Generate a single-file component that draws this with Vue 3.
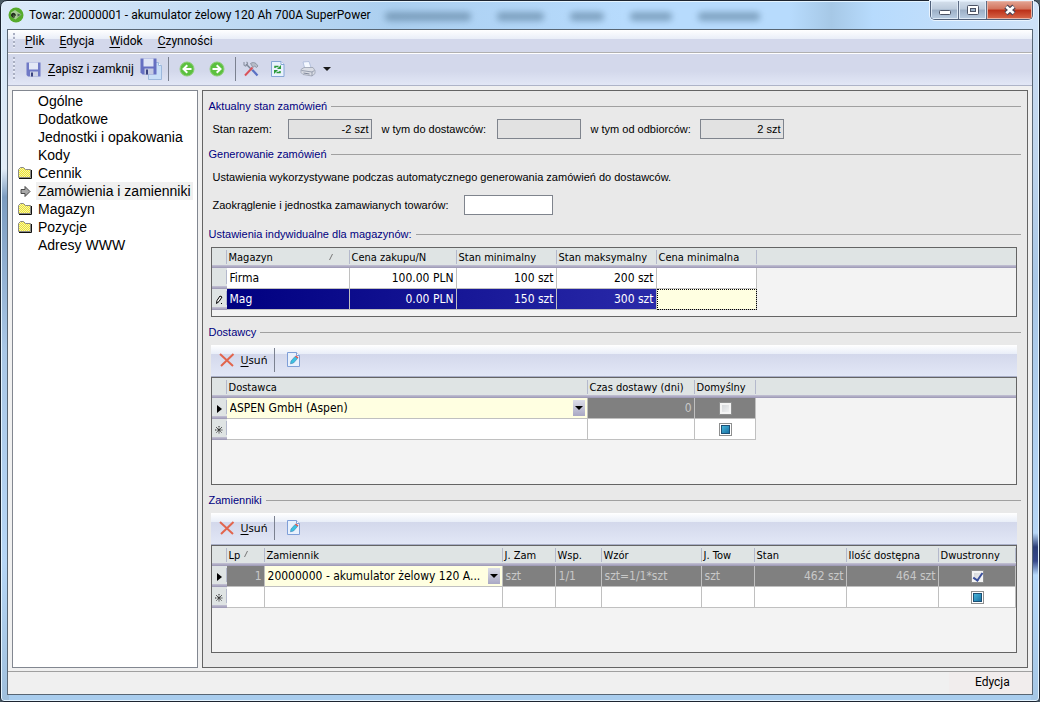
<script setup>
import { ref } from 'vue'

const menu = ['Plik', 'Edycja', 'Widok', 'Czynności']
const ghosts = [86, 47, 34, 42, 62]

const tree = [
  { label: 'Ogólne' },
  { label: 'Dodatkowe' },
  { label: 'Jednostki i opakowania' },
  { label: 'Kody' },
  { label: 'Cennik', icon: 'folder' },
  { label: 'Zamówienia i zamienniki', icon: 'arrow' },
  { label: 'Magazyn', icon: 'folder' },
  { label: 'Pozycje', icon: 'folder' },
  { label: 'Adresy WWW' },
]

const warehouses = [
  { name: 'Firma', price: '100.00 PLN', min: '100 szt', max: '200 szt' },
  { name: 'Mag', price: '0.00 PLN', min: '150 szt', max: '300 szt', active: true },
]

const rounding = ref('')
</script>

<template>
  <div class="window">
    <header class="titlebar">
      <div class="ghosts" aria-hidden="true">
        <i v-for="(w, i) in ghosts" :key="i" :style="{ width: w + 'px' }"></i>
      </div>
      <svg class="app-icon" width="16" height="16" viewBox="0 0 16 16">
        <circle cx="8" cy="8" r="7.5" fill="#56ab2c" />
        <path d="M3 5.500L7 3l6.500 4.500-6 5-4.500-3z" fill="#a9cb97" />
        <path d="M3.800 8h3.400a1.800 1.800 0 1 0-.5 1.500" fill="none" stroke="#1d2a18" stroke-width="1.300" />
        <path d="M9.500 6.500l3.500 1.200-3.500 2z" fill="#55655a" />
      </svg>
      <h1>Towar: 20000001 - akumulator żelowy 120 Ah 700A SuperPower</h1>
      <div class="winbtns">
        <button type="button" aria-label="Minimalizuj">
          <svg width="14" height="14" viewBox="0 0 14 14"><rect x="1.500" y="7.500" width="11" height="4" rx="1" fill="#fff" stroke="#4a5264" /></svg>
        </button>
        <button type="button" aria-label="Maksymalizuj">
          <svg width="14" height="14" viewBox="0 0 14 14"><rect x="1.500" y="2.500" width="11" height="9" rx="1" fill="#fff" stroke="#4a5264" /><rect x="4.500" y="5.500" width="5" height="3" fill="#9db3cb" stroke="#4a5264" /></svg>
        </button>
        <button type="button" class="close" aria-label="Zamknij">
          <svg width="14" height="14" viewBox="0 0 14 14"><path d="M3 3.500l8 7M11 3.500l-8 7" stroke="#4a4455" stroke-width="5" /><path d="M3.300 3.800l7.400 6.400M10.700 3.800l-7.400 6.400" stroke="#fff" stroke-width="2.800" /></svg>
        </button>
      </div>
    </header>

    <div class="client">
      <nav class="menubar">
        <span class="grip"></span>
        <button v-for="m in menu" :key="m" type="button"><u>{{ m[0] }}</u>{{ m.slice(1) }}</button>
      </nav>

      <div class="toolbar">
        <span class="grip"></span>
        <button type="button" class="save">
          <svg width="15" height="15" viewBox="0 0 15 15"><path d="M.5.500h14v14H2L.5 13z" fill="#6f79c6" /><path d="M3 .5h9v7H3z" fill="#e3e8f6" /><path d="M4 9.500h8v5H4z" fill="#cdd3e6" /><path d="M5 10.500h2v4H5z" fill="#39427f" /></svg>
          <span><u>Z</u>apisz i zamknij</span>
        </button>
        <button type="button" class="saveall" aria-label="Zapisz i nowy">
          <svg width="23" height="22" viewBox="0 0 23 22"><path d="M8.500 4.500h10l3 3v14h-13z" fill="#c9dff7" stroke="#9db8dc" /><path d="M18.500 4.500v3h3" fill="#fff" stroke="#9db8dc" /><path d="M.5.500h16v16h-14l-2-2z" fill="#6670c2" /><path d="M3.500.500h10v8h-10z" fill="#dfe5f6" /><path d="M4.500 10.500h9v6h-9z" fill="#c5cbe2" /><path d="M6 11.500h2v5H6z" fill="#39427f" /></svg>
        </button>
        <span class="sep"></span>
        <button type="button" class="nav" aria-label="Poprzedni">
          <svg width="16" height="16" viewBox="0 0 16 16"><circle cx="8" cy="8" r="7" fill="#5cc040" stroke="#8ccf76" /><path d="M12.500 8H5M8.300 4.300L4.500 8l3.800 3.700" fill="none" stroke="#fff" stroke-width="2" /></svg>
        </button>
        <button type="button" class="nav" aria-label="Następny">
          <svg width="16" height="16" viewBox="0 0 16 16"><circle cx="8" cy="8" r="7" fill="#5cc040" stroke="#8ccf76" /><path d="M3.500 8H11M7.700 4.300L11.500 8l-3.800 3.700" fill="none" stroke="#fff" stroke-width="2" /></svg>
        </button>
        <span class="sep"></span>
        <button type="button" class="tools" aria-label="Narzędzia">
          <svg width="16" height="16" viewBox="0 0 16 16"><path d="M3 3l7 7" stroke="#7d8698" stroke-width="1.400" /><path d="M1 1v3l1.500 1 2-1V2L3.500.800" fill="none" stroke="#8b93a3" stroke-width="1.100" /><path d="M9.500 9l5 5.500" stroke="#5a70c4" stroke-width="2.200" /><path d="M9.500 6.500L2 14.500" stroke="#d9525a" stroke-width="2" /><path d="M7.500 2.500c2-1.500 4-1 5.500 0L15 5l-1.500 1.500-2-1.500-1.500 1.500z" fill="#b6bcc8" stroke="#7d8594" stroke-width=".7" /></svg>
        </button>
        <button type="button" class="refresh" aria-label="Odśwież">
          <svg width="14" height="16" viewBox="0 0 14 16"><path d="M.5.500h9.500l3 3v12H.5z" fill="#e9f2fd" stroke="#86a6d6" /><path d="M10 .5v3h3" fill="#fff" stroke="#86a6d6" /><path d="M4 7V5.500h3.500M9 10v1.500H5.500" fill="none" stroke="#2c9a3a" stroke-width="1.500" /><path d="M10 4v4H6z M3 9h4l-4 4z" fill="#2c9a3a" /></svg>
        </button>
        <button type="button" class="print" aria-label="Drukuj">
          <svg width="16" height="16" viewBox="0 0 16 16"><path d="M3 1l6-.5 2 6-6 1.500z" fill="#f4f8ff" stroke="#a9b9d8" stroke-width=".8" /><path d="M1 8.500l3-2 9 0 2 3v3l-3 2.500-9-1.500-2-2z" fill="#d9dce4" stroke="#9ba1b0" stroke-width=".8" /><path d="M1.500 9.500l10.500 1.500 2.500-1.500M12 11v4" fill="none" stroke="#8f96a8" stroke-width=".9" /><path d="M3.500 12l6 1" stroke="#7f879a" /></svg>
          <svg width="8" height="4" viewBox="0 0 8 4"><path d="M0 0h8L4 4z" fill="#1a1a1a" /></svg>
        </button>
      </div>

      <div class="body">
        <aside class="tree">
          <a v-for="t in tree" :key="t.label" href="#" :class="{ current: t.icon === 'arrow' }">
            <span class="ticon">
              <svg v-if="t.icon === 'folder'" width="15" height="12" viewBox="0 0 15 12">
                <defs><pattern id="dither" width="2" height="2" patternUnits="userSpaceOnUse"><rect width="2" height="2" fill="#f6f2b0" /><path d="M0 0h1v1H0zM1 1h1v1H1z" fill="#efe630" /></pattern></defs>
                <path d="M.5 10.500V2.500l2-2h3l2 2h5v8z" fill="url(#dither)" stroke="#8a8a86" /><path d="M1 11.500h12.500V3" fill="none" stroke="#111" />
              </svg>
              <svg v-else-if="t.icon" width="11" height="11" viewBox="0 0 11 11"><path d="M1 3.500h4v-3l5 5-5 5v-3H1z" fill="#a8a8a8" stroke="#4a4a4a" /></svg>
            </span>
            <span class="tlabel">{{ t.label }}</span>
          </a>
        </aside>

        <main class="panel">
          <h2><span>Aktualny stan zamówień</span></h2>
          <div class="row">
            <label for="total">Stan razem:</label>
            <input id="total" class="sum" value="-2 szt" readonly />
            <label for="sup" class="wide">w tym do dostawców:</label>
            <input id="sup" class="sum" value="" readonly />
            <label for="cust" class="mid">w tym od odbiorców:</label>
            <input id="cust" class="sum" value="2 szt" readonly />
          </div>

          <h2><span>Generowanie zamówień</span></h2>
          <p class="note">Ustawienia wykorzystywane podczas automatycznego generowania zamówień do dostawców.</p>
          <div class="row round">
            <label for="round">Zaokrąglenie i jednostka zamawianych towarów:</label>
            <input id="round" v-model="rounding" class="free" />
          </div>

          <h2 class="lower"><span>Ustawienia indywidualne dla magazynów:</span></h2>
          <div class="grid short">
            <table>
              <colgroup><col class="c15" /><col class="c123" /><col class="c107" /><col class="c100" /><col class="c100" /><col class="c100" /><col /></colgroup>
              <thead>
                <tr>
                  <th></th>
                  <th class="sorted">Magazyn<svg width="5" height="6" viewBox="0 0 5 6"><path d="M.5 6L3.500 0" stroke="#777" /></svg></th>
                  <th>Cena zakupu/N</th><th>Stan minimalny</th><th>Stan maksymalny</th><th>Cena minimalna</th><th></th>
                </tr>
              </thead>
              <tbody>
                <tr v-for="w in warehouses" :key="w.name" :class="{ active: w.active }">
                  <td class="ind">
                    <svg v-if="w.active" width="8" height="10" viewBox="0 0 8 10"><path d="M1.500 8.500l.5-3L5 1l2 1-3 4.500z" fill="#fff" stroke="#000" /><path d="M6 8.500h1" stroke="#000" /></svg>
                  </td>
                  <td>{{ w.name }}</td>
                  <td class="num">{{ w.price }}</td>
                  <td class="num">{{ w.min }}</td>
                  <td class="num">{{ w.max }}</td>
                  <td :class="{ focus: w.active }"></td>
                  <td class="rest"></td>
                </tr>
              </tbody>
            </table>
          </div>

          <h2><span>Dostawcy</span></h2>
          <div class="gridbar">
            <button type="button" class="del">
              <svg width="16" height="14" viewBox="0 0 16 14"><path d="M1 1l13 12M14.500 1L2 13" stroke="#e2654d" stroke-width="2" /></svg>
              <span><u>U</u>suń</span>
            </button>
            <span class="sep"></span>
            <button type="button" aria-label="Edytuj dostawcę">
              <svg width="13" height="15" viewBox="0 0 13 15"><path d="M.5.500h9l3 3v11H.5z" fill="#e8f1fd" stroke="#7f9fd8" /><path d="M9.500.500v3h3" fill="#fff" stroke="#7f9fd8" /><path d="M4 9l4-4.500 2.500 2-4 4.500-3 .8z" fill="#3cc3e0" stroke="#3a7fb4" stroke-width=".6" /><path d="M8 4.500l1-1 2.500 2-1 1z" fill="#e0564a" /></svg>
            </button>
          </div>
          <div class="grid">
            <table>
              <colgroup><col class="c15" /><col class="c361" /><col class="c107" /><col class="c61" /><col /></colgroup>
              <thead>
                <tr><th></th><th>Dostawca</th><th>Czas dostawy (dni)</th><th>Domyślny</th><th></th></tr>
              </thead>
              <tbody>
                <tr class="grey">
                  <td class="ind"><svg width="5" height="8" viewBox="0 0 5 8"><path d="M0 0l5 4-5 4z" /></svg></td>
                  <td class="edit"><div class="combo"><select aria-label="Dostawca"><option>ASPEN GmbH (Aspen)</option></select><svg width="12" height="16" viewBox="0 0 12 16"><path d="M2 6h8L6 10z" /></svg></div></td>
                  <td class="num">0</td>
                  <td class="chk"><input type="checkbox" aria-label="Domyślny" /></td>
                  <td class="rest"></td>
                </tr>
                <tr>
                  <td class="ind"><svg width="8" height="8" viewBox="0 0 8 8"><path d="M4 0v8M0 4h8M1 1l6 6M7 1L1 7" stroke="#222" stroke-dasharray="1 .6" /></svg></td>
                  <td></td><td></td>
                  <td class="chk"><input type="checkbox" class="mixed" aria-label="Domyślny, nowy wiersz" /></td>
                  <td class="rest"></td>
                </tr>
              </tbody>
            </table>
          </div>

          <h2><span>Zamienniki</span></h2>
          <div class="gridbar">
            <button type="button" class="del">
              <svg width="16" height="14" viewBox="0 0 16 14"><path d="M1 1l13 12M14.500 1L2 13" stroke="#e2654d" stroke-width="2" /></svg>
              <span><u>U</u>suń</span>
            </button>
            <span class="sep"></span>
            <button type="button" aria-label="Edytuj zamiennik">
              <svg width="13" height="15" viewBox="0 0 13 15"><path d="M.5.500h9l3 3v11H.5z" fill="#e8f1fd" stroke="#7f9fd8" /><path d="M9.500.500v3h3" fill="#fff" stroke="#7f9fd8" /><path d="M4 9l4-4.500 2.500 2-4 4.500-3 .8z" fill="#3cc3e0" stroke="#3a7fb4" stroke-width=".6" /><path d="M8 4.500l1-1 2.500 2-1 1z" fill="#e0564a" /></svg>
            </button>
          </div>
          <div class="grid last">
            <table>
              <colgroup><col class="c15" /><col class="c38" /><col class="c238" /><col class="c53" /><col class="c46" /><col class="c100" /><col class="c53" /><col class="c92" /><col class="c92" /><col class="c77" /><col /></colgroup>
              <thead>
                <tr>
                  <th></th>
                  <th class="sorted">Lp<svg width="5" height="6" viewBox="0 0 5 6"><path d="M.5 6L3.500 0" stroke="#777" /></svg></th>
                  <th>Zamiennik</th><th>J. Zam</th><th>Wsp.</th><th>Wzór</th><th>J. Tow</th><th>Stan</th><th>Ilość dostępna</th><th>Dwustronny</th><th></th>
                </tr>
              </thead>
              <tbody>
                <tr class="grey">
                  <td class="ind"><svg width="5" height="8" viewBox="0 0 5 8"><path d="M0 0l5 4-5 4z" /></svg></td>
                  <td class="num">1</td>
                  <td class="edit"><div class="combo"><select aria-label="Zamiennik"><option>20000000 - akumulator żelowy 120 A...</option></select><svg width="12" height="16" viewBox="0 0 12 16"><path d="M2 6h8L6 10z" /></svg></div></td>
                  <td>szt</td><td>1/1</td><td>szt=1/1*szt</td><td>szt</td>
                  <td class="num">462 szt</td><td class="num">464 szt</td>
                  <td class="chk"><input type="checkbox" class="ticked" checked aria-label="Dwustronny" /></td>
                  <td class="rest"></td>
                </tr>
                <tr>
                  <td class="ind"><svg width="8" height="8" viewBox="0 0 8 8"><path d="M4 0v8M0 4h8M1 1l6 6M7 1L1 7" stroke="#222" stroke-dasharray="1 .6" /></svg></td>
                  <td></td><td></td><td></td><td></td><td></td><td></td><td></td><td></td>
                  <td class="chk"><input type="checkbox" class="mixed" aria-label="Dwustronny, nowy wiersz" /></td>
                  <td class="rest"></td>
                </tr>
              </tbody>
            </table>
          </div>
        </main>
      </div>

      <footer class="status"><span>Edycja</span></footer>
    </div>
  </div>
</template>

<style>
body { background: #4a5a64; }
</style>

<style scoped>
* { box-sizing: border-box; }
.window {
  min-height: 100vh;
  display: flex;
  flex-direction: column;
  padding: 0 6px 6px;
  border: 1px solid #1c2430;
  border-radius: 7px 7px 4px 4px;
  box-shadow: inset 0 0 0 1px #e4f4ff;
  background:
    linear-gradient(90deg, #dceafa 0, #c3dcf4 20%, #abcff0 38%, #b7dbfd 60%, #b7dbfd 76%, #a6c8e6 80%, #b7dbfd 84%, #cfe2f8 100%) top / 100% 29px no-repeat,
    linear-gradient(180deg, #cfe0f4 0, #bcd3ec 25%, #a9c7e6 40%, #b6d6f6 76%, #2c3f78 78%, #36488a 80%, #b6d9fb 82%, #a5c6e4 100%) right / 8px 100% no-repeat,
    linear-gradient(180deg, #cfe3f7 0, #e2ecf6 24%, #7c9cc0 28%, #a9c7e6 50%, #b6d6f6 80%, #9fbfdc 100%) left / 8px 100% no-repeat,
    #a9cdee;
  font-family: Roboto, "Noto Sans", sans-serif;
  font-size: 12px;
  color: #000;
}
button { font: inherit; color: inherit; background: none; border: 0; padding: 0; display: flex; align-items: center; white-space: nowrap; }
svg { display: block; flex: none; }
u { text-underline-offset: 2px; }
.titlebar { position: relative; height: 28px; display: flex; align-items: center; }
.titlebar h1 { position: relative; margin: 0 auto 0 5px; font-size: 12px; font-weight: 400; line-height: 28px; }
.app-icon { position: relative; margin-left: 1px; }
.ghosts { position: absolute; left: 378px; top: 11px; display: flex; gap: 26px; }
.ghosts i { height: 9px; border-radius: 4px; background: #5c7f9c; opacity: .6; filter: blur(3px); }
.winbtns { position: relative; align-self: flex-start; height: 19px; display: flex; border: 1px solid #4f5f78; border-top: 0; border-radius: 0 0 5px 5px; overflow: hidden; box-shadow: 0 0 0 1px #eaf4fe; }
.winbtns button { width: 28px; justify-content: center; border-right: 1px solid #5d6c84; background: linear-gradient(#d5e0ec 0, #bccbdc 45%, #9cafc6 50%, #b9cde2 100%); box-shadow: inset 0 0 0 1px #dfeaf6; }
.winbtns .close { width: 45px; border-right: 0; background: linear-gradient(#e3a594 0, #d3735c 45%, #bb2f18 50%, #d9684a 100%); box-shadow: inset 0 0 0 1px #e9b4a6; }

.client { flex: 1; display: flex; flex-direction: column; border: 1px solid #586674; background: #f0f0f0; }
.menubar, .toolbar { display: flex; align-items: center; padding-left: 5px; }
.menubar { height: 24px; gap: 15px; border-bottom: 1px solid #fff; background: linear-gradient(#fff 0, #e9eef8 9px, #d3d8eb 9px, #d3d8eb 22px, #b0b0b0 22px); padding-bottom: 2px; }
.toolbar { height: 32px; border-bottom: 1px solid #aeb4c8; background: linear-gradient(#d3d8eb 0, #d3d8eb 55%, #e2e7f6 100%); padding-bottom: 1px; }
.grip { width: 2px; align-self: stretch; margin: 3px 0; background: repeating-linear-gradient(180deg, #a9afc2 0, #a9afc2 2px, #eef1fa 2px, #dfe3f2 4px); }
.menubar .grip { margin-right: -5px; }
.toolbar .grip { margin-right: 11px; }
.save { gap: 7px; }
.saveall { margin: 0 5px 0 6px; }
.sep { width: 1px; height: 24px; background: #7b8190; }
.nav { margin-left: 10px; }
.nav + .nav { margin: 0 10px 0 14px; }
.tools { margin: 0 12px 0 7px; }
.print { margin-left: 15px; gap: 7px; }

.body { flex: 1; display: flex; gap: 4px; padding: 4px 4px 3px; }
.tree { flex: 0 0 184px; border: 1px solid #828790; background: #fff; padding: 1px 4px; font: 14px/18px "Liberation Sans", Arial, sans-serif; }
.tree a { display: flex; align-items: center; height: 18px; color: #000; text-decoration: none; }
.ticon { width: 19px; display: flex; justify-content: center; padding-right: 3px; }
.tlabel { padding: 0 2px; white-space: nowrap; }
.current .tlabel { background: #f0f0f0; }
.panel { flex: 1; min-width: 0; display: flex; flex-direction: column; border: 1px solid #646464; background: #e9e9e9; padding: 0 6px 14px; font-family: "Liberation Sans", Arial, sans-serif; font-size: 11px; }
h2 { display: flex; align-items: center; gap: 4px; margin: 7px 0 5px; height: 16px; font-size: 11px; font-weight: 400; line-height: 16px; color: #000080; white-space: nowrap; }
h2::after { content: ""; flex: 1; height: 1px; background: #a0a0a0; }
h2.lower { margin-top: 11px; }
.row { display: flex; align-items: center; height: 20px; padding-left: 4px; white-space: nowrap; }
.row input { height: 20px; border: 1px solid #7f848d; border-radius: 0; padding: 0 2px; font: inherit; text-align: right; background: #e2e2e2; }
.row .sum { width: 84px; margin: 0 10px 0 0; }
.row label { width: 75px; }
.row .wide { width: 115px; }
.row .mid { width: 109px; }
.round label { width: 251px; }
.row .free { width: 89px; background: #fff; }
.note { margin: 2px 0 10px; padding-left: 4px; line-height: 16px; }

.gridbar { height: 32px; margin: 0 4px 0 2px; display: flex; align-items: center; padding: 0 0 2px 8px; border-bottom: 1px solid #aab0c8; background: linear-gradient(#fff 0, #e9eef8 9px, #d3d8eb 9px, #e2e7f6 100%); font: 11px "Noto Sans", sans-serif; }
.del { gap: 6px; margin-right: 7px; }
.gridbar .sep { margin-right: 12px; }
.grid { margin: 0 4px 0 2px; height: 108px; border: 1px solid #646464; background: #f3f3f3; overflow: hidden; }
.grid.short { height: 70px; }
.grid.last { height: auto; flex: 1; min-height: 108px; }
table { width: 100%; table-layout: fixed; border-collapse: separate; border-spacing: 0; font: 12px "DejaVu Sans Condensed", Tahoma, sans-serif; }
.c15 { width: 15px; } .c38 { width: 38px; } .c46 { width: 46px; } .c53 { width: 53px; } .c61 { width: 61px; }
.c77 { width: 77px; } .c92 { width: 92px; } .c100 { width: 100px; } .c107 { width: 107px; } .c123 { width: 123px; }
.c238 { width: 238px; } .c361 { width: 361px; }
th { height: 20px; padding: 0 0 2px 2px; font-size: 11px; font-weight: 400; text-align: left; white-space: nowrap; overflow: hidden;
  background: linear-gradient(#c4c2d4, #9a96b4) bottom / 100% 3px no-repeat, linear-gradient(#b4b9cc, #b4b9cc) right 2px / 1px 14px no-repeat, #dfe4e4; }
th:last-child { background: linear-gradient(#c4c2d4, #9a96b4) bottom / 100% 3px no-repeat, #dfe4e4; }
th.sorted svg { display: inline-block; margin-left: 4px; vertical-align: 2px; }
.short th.sorted svg { float: right; margin: 3px 16px 0 0; }
td { height: 21px; padding: 0 2px 0 3px; background: #fff; border-right: 1px solid #c0c0c0; border-bottom: 1px solid #c0c0c0; white-space: nowrap; overflow: hidden; line-height: 16px; }
td.num { text-align: right; }
td.ind { padding: 0; border: 0; background: linear-gradient(#c4c2d4, #9a96b4) bottom / 100% 3px no-repeat, linear-gradient(#b4b9cc, #b4b9cc) right 2px / 1px 14px no-repeat, #dfe4e4; }
td.ind svg { margin: 0 auto; }
td.rest { background: #f3f3f3; border: 0; padding: 0; }
.active { background: linear-gradient(90deg, #000080 0, #000080 15px, #2a2aaa 450px); color: #fff; }
.active td:not(.ind):not(.rest) { background: none; }
.active td.focus:not(.ind) { background: #ffffe1; outline: 1px dotted #000; outline-offset: -1px; }
.grey td:not(.ind):not(.rest):not(.edit) { background: #808080; color: #c8c8c8; }
td.edit { background: #ffffe1; padding: 0 2px 0 0; color: #000; }
.combo { display: flex; align-items: center; }
.combo svg { background: linear-gradient(#dcdde8, #a9a8c4); margin-left: -12px; pointer-events: none; }
select { appearance: none; flex: 1; min-width: 0; border: 0; padding: 0 14px 0 3px; height: 20px; background: none; font: inherit; color: inherit; }
.chk input { appearance: none; display: block; margin: 0 auto; width: 13px; height: 13px; border: 1px solid #8e8f8f; background: linear-gradient(135deg, #cfd2d6, #f6f6f6) padding-box; box-shadow: inset 0 0 0 2px #f4f4f4; }
.chk .mixed { background: linear-gradient(135deg, #54c8e8, #0c5f96); box-shadow: inset 0 0 0 1px #fff, inset 0 0 0 2px #1d4f74; }
.chk .ticked { position: relative; }
.chk .ticked::after { content: ""; position: absolute; left: 3px; top: 0; width: 4px; height: 8px; border: solid #3a4f9c; border-width: 0 2px 2px 0; transform: rotate(35deg); }

.status { height: 23px; border-top: 1px solid #a0a0a0; display: flex; justify-content: flex-end; }
.status span { width: 83px; line-height: 21px; padding-left: 26px; background: #f1eded; }
</style>
